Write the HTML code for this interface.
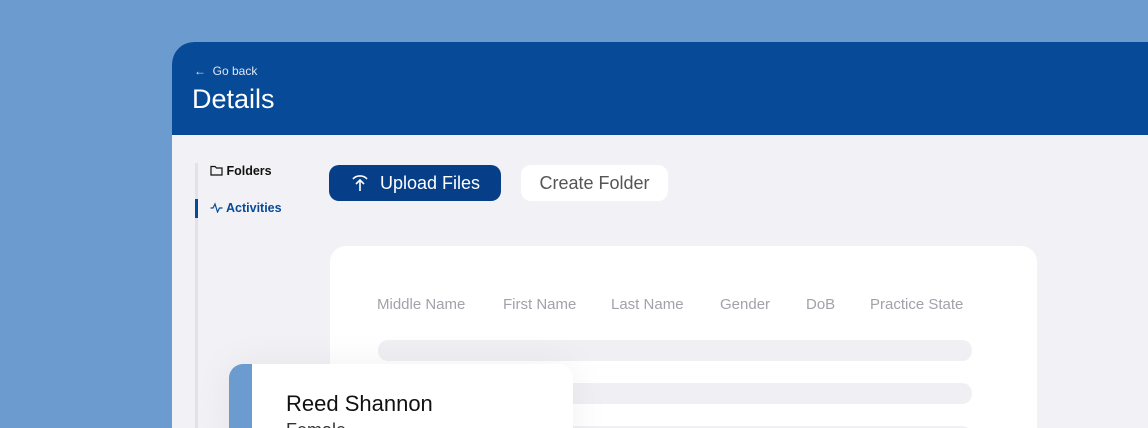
<!DOCTYPE html><html><head><style>
*{margin:0;padding:0;box-sizing:border-box}
html,body{width:1148px;height:428px;overflow:hidden}
body{background:#6c9bd0;font-family:"Liberation Sans",sans-serif;position:relative}
.panel{position:absolute;left:172px;top:42px;width:976px;height:386px;background:#f2f2f6;border-top-left-radius:22px;overflow:hidden}
.hdr{height:93px;background:#064a98;color:#fff;position:relative}
.back{position:absolute;left:22px;top:22px;font-size:12px;color:#dfe7f3}
.title{position:absolute;left:20px;top:42px;font-size:27px}
.side{position:absolute;left:23px;top:121px;width:3px;height:300px;background:#e2e2e8}
.ind{position:absolute;left:23px;top:157px;width:3px;height:19px;background:#064a98}
.nav{position:absolute;font-size:12.5px;font-weight:bold}
.btn{position:absolute;top:123px;height:36px;border-radius:10px;font-size:18px;display:flex;align-items:center;justify-content:center}
.card{position:absolute;left:158px;top:204px;width:707px;height:300px;background:#fff;border-radius:16px}
.th{position:absolute;top:50px;font-size:15px;color:#a2a2aa}
.bar{position:absolute;left:48px;width:594px;height:21px;background:#f0f0f4;border-radius:10px}
.pc{position:absolute;left:229px;top:364px;width:344px;height:100px;background:#fff;border-radius:14px;overflow:hidden;box-shadow:0 0 40px rgba(0,0,0,.06)}
.pc .acc{position:absolute;left:0;top:0;width:23px;height:100%;background:#6c9bd0}
</style></head><body>
<div class="panel">
 <div class="hdr"><div class="back">← &nbsp;Go back</div><div class="title">Details</div></div>
 <div class="side"></div><div class="ind"></div>
 <div class="nav" style="left:38px;top:122px;color:#111">
  <svg width="13" height="11" viewBox="0 0 13 11" style="vertical-align:-1px"><path d="M1 1.5h4l1.5 1.5H12v7H1z" fill="none" stroke="#111" stroke-width="1.2"/></svg> Folders</div>
 <div class="nav" style="left:38px;top:159px;color:#064a98">
  <svg width="13" height="11" viewBox="0 0 13 11" style="vertical-align:-1px"><path d="M0.5 6h2.5l2-4 2.5 8 2-4h3" fill="none" stroke="#064a98" stroke-width="1.2"/></svg> Activities</div>
 <div class="btn" style="left:157px;width:172px;background:#063f87;color:#fff">
  <svg width="20" height="20" viewBox="0 0 20 20" style="margin-right:10px"><path d="M3 6a8 6 0 0 1 14 0M10 18V7M6 11l4-4 4 4" fill="none" stroke="#fff" stroke-width="1.6"/></svg>Upload Files</div>
 <div class="btn" style="left:349px;width:147px;background:#fff;color:#555">Create Folder</div>
 <div class="card">
  <div class="th" style="left:47px">Middle Name</div>
  <div class="th" style="left:173px">First Name</div>
  <div class="th" style="left:281px">Last Name</div>
  <div class="th" style="left:390px">Gender</div>
  <div class="th" style="left:476px">DoB</div>
  <div class="th" style="left:540px">Practice State</div>
  <div class="bar" style="top:94px"></div>
  <div class="bar" style="top:137px"></div>
  <div class="bar" style="top:180px"></div>
 </div>
</div>
<div class="pc"><div class="acc"></div>
 <div style="position:absolute;left:57px;top:27px;font-size:22px;color:#111">Reed Shannon</div>
 <div style="position:absolute;left:57px;top:56px;font-size:18px;color:#333">Female</div>
</div>
</body></html>
